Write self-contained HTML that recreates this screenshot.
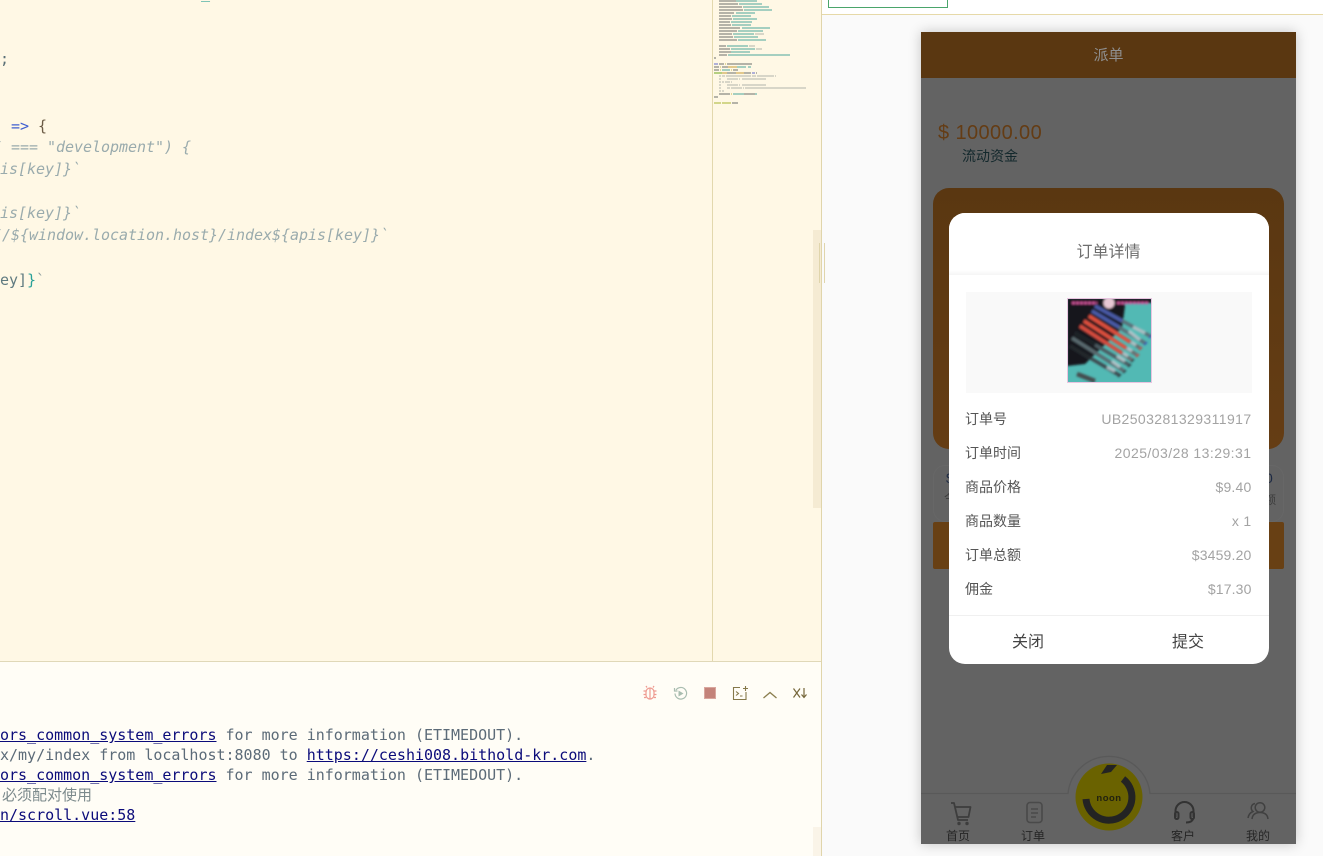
<!DOCTYPE html>
<html lang="zh">
<head>
<meta charset="utf-8">
<title>派单</title>
<style>
html,body{margin:0;padding:0;width:1323px;height:856px;overflow:hidden;background:#fafafa}
body{position:relative;font-family:"Liberation Sans","Noto Sans CJK SC",sans-serif}
.a{position:absolute;white-space:pre}
.code{font-family:"DejaVu Sans Mono","Liberation Mono","Noto Sans CJK SC",monospace;font-size:15px;line-height:22px;font-style:italic;color:#9aabad;letter-spacing:-.03px}
.term{font-family:"DejaVu Sans Mono","Liberation Mono","Noto Sans CJK SC",monospace;font-size:15px;line-height:20px;color:#5c6b78;letter-spacing:-.01px}
.term u{color:#0b0b7a;text-decoration:underline}
.row{position:absolute;left:965px;width:286.5px;height:20px;font-size:14px;line-height:20px}
.row b{position:absolute;left:0;font-weight:400;color:#555}
.row i{position:absolute;right:0;font-style:normal;color:#a3a3a3}
.tab{position:absolute;top:828px;width:60px;text-align:center;font-size:12px;line-height:16px;color:#262626}
</style>
</head>
<body>
<!-- editor -->
<div class="a" style="left:0;top:0;width:821px;height:661px;background:#fff8e5;overflow:hidden">
  <div class="a code" style="left:147px;top:-18px;font-style:normal;color:#2aa198">(  [  _   )</div>
  <div class="a code" style="left:0;top:48px;font-style:normal;color:#586e75">;</div>
  <div class="a code" style="left:11px;top:115px;font-style:normal;color:#3f5fd0">=&gt; <span style="color:#6b5b45">{</span></div>
  <div class="a code" style="left:-7px;top:136px">/ === "development") {</div>
  <div class="a code" style="left:-9px;top:158px">pis[key]}`</div>
  <div class="a code" style="left:-9px;top:202px">pis[key]}`</div>
  <div class="a code" style="left:-7px;top:224px">//${window.location.host}/index${apis[key]}`</div>
  <div class="a code" style="left:-9px;top:269px;font-style:normal;color:#5f7a80">key]<span style="color:#2aa198">}</span><span style="color:#93a1a1">`</span></div>

  <svg class="a" style="left:0;top:0" width="821" height="120" viewBox="0 0 2463 360" fill="none" stroke-width="6">
    <g transform="translate(2100 0)">
    <path stroke="#b5b3a8" d="M57 3H108M57 12H114M57 21H126M57 30H129M57 39H102M57 48H93M57 57H96M57 66H90M57 75H93M57 84H120M57 93H111M57 102H96M57 111H99M57 120H111M57 138H78M57 147H90M57 156H93M57 165H81M42 174H48M57 192H72M81 192H156M42 201H57M66 201H84M42 210H57M99 210H114M81 219H108M132 219H153M168 219H171M57 282H90M132 282H165M42 291H54M96 309H114"/>
    <path stroke="#a5cfc0" d="M108 3H171M117 12H186M129 21H207M132 30H216M108 39H165M96 48H153M99 57H171M93 66H156M96 75H153M126 84H210M114 93H189M99 102H162M102 111H174M114 120H198M81 138H144M93 147H165M93 156H150M84 165H270M111 201H138M144 201H153M66 210H90M99 282H132M165 282H171"/>
    <path stroke="#d8d6c8" d="M165 102H192M147 138H165M168 147H186M57 228H63M66 228H75M78 228H153M156 228H168M171 228H222M225 228H228M57 237H63M81 237H114M117 237H120M126 237H198M57 246H63M66 246H72M75 246H90M93 246H96M57 255H63M81 255H114M117 255H120M126 255H198M57 264H63M81 264H90M93 264H126M129 264H132M135 264H318M57 273H63M66 273H72"/>
    <path stroke="#b0b0d8" d="M42 192H54M156 219H165"/>
    <path stroke="#e3d89a" d="M75 192H78M60 201H63M60 210H63M93 210H96M93 282H96"/>
    <path stroke="#e3c98c" d="M84 201H111M66 219H81M108 219H132"/>
    <path stroke="#b5cf80" d="M42 219H66"/>
    <path stroke="#d3d68a" d="M42 309H63M66 309H93"/>
    </g>
  </svg>
  <div class="a" style="left:712px;top:0;width:1px;height:661px;background:#e3d8ad"></div>
  <div class="a" style="left:813px;top:230px;width:8px;height:278px;background:#f5ebd3"></div>
</div>
<!-- terminal -->
<div class="a" style="left:0;top:661px;width:821px;height:195px;background:#fffdf6;border-top:1px solid #e0d8b8;box-sizing:border-box"></div>
<div class="a term" style="left:0;top:725px"><u>ors_common_system_errors</u> for more information (ETIMEDOUT).</div>
<div class="a term" style="left:0;top:745px">x/my/index from localhost:8080 to <u>https://ceshi008.bithold-kr.com</u>.</div>
<div class="a term" style="left:0;top:765px"><u>ors_common_system_errors</u> for more information (ETIMEDOUT).</div>
<div class="a term" style="left:2px;top:785px;color:#7c8a8c">必须配对使用</div>
<div class="a term" style="left:0;top:805px"><u>n/scroll.vue:58</u></div>
<div class="a" style="left:813px;top:827px;width:8px;height:29px;background:#faf4e8"></div>

<svg class="a" style="left:640px;top:683px" width="172" height="22" viewBox="0 0 172 22" fill="none">
  <g stroke="#ee9a90" stroke-width="1.2"><rect x="6" y="5" width="8" height="11" rx="4"/><path d="M10 5V16M7 4.500L6 3M13 4.500L14 3M6 8H3.500M6 11.500H3.500M6 14.500H4M14 8H16.500M14 11.500H16.500M14 14.500H16"/></g>
  <g stroke="#a9bdb0" stroke-width="1.2"><path d="M36 7A5.800 5.800 0 1 1 35 10.500"/><path d="M34.500 5V8H37.500"/></g><path d="M38.500 7.500L43.500 10.500L38.500 13.500Z" fill="#a9bdb0"/>
  <rect x="64.500" y="4.500" width="11" height="11" fill="#c4837a" stroke="#d9a79e"/>
  <g stroke="#85784a" stroke-width="1.100"><path d="M100 4.500H93.500V16.500H106V9M96 8.500L98.500 10.500L96 12.500M100 13H102.500M105.500 3V8M103 5.500H108"/></g>
  <path d="M123.500 15L130 9.500L136.500 15" stroke="#8a7d4d" stroke-width="1.300"/>
  <g stroke="#75663a" stroke-width="1.200"><path d="M153.500 5.500L160 14.500M160 5.500L153.500 14.500M164 5V14M161.500 11.500L164 14.500L166.500 11.500"/></g>
</svg>

<!-- divider and sash -->
<div class="a" style="left:821px;top:0;width:1px;height:856px;background:#e0d5ab"></div>
<div class="a" style="left:819px;top:243px;width:1px;height:40px;background:#e0d5ab"></div>
<div class="a" style="left:824px;top:243px;width:1px;height:40px;background:#e0d5ab"></div>
<div class="a" style="left:822px;top:0;width:501px;height:14px;background:#fff"></div>
<div class="a" style="left:822px;top:14px;width:501px;height:1px;background:#e6d9a8"></div>
<div class="a" style="left:828px;top:-2px;width:120px;height:10px;box-sizing:border-box;border:1px solid #4aa56b;background:#fff"></div>

<!-- phone -->
<div class="a" style="left:921px;top:32px;width:375px;height:812px;background:#636363;box-shadow:0 0 12px rgba(0,0,0,.22);overflow:hidden">
  <div class="a" style="left:0;top:0;width:375px;height:46px;background:#5a3711;text-align:center;line-height:48px;font-size:15px;color:#8f8f8f">派单</div>
  <div class="a" style="left:17px;top:88px;font-size:20px;line-height:26px;color:#643c14;letter-spacing:.4px">$ 10000.00</div>
  <div class="a" style="left:41px;top:114px;font-size:14px;line-height:20px;color:#13282c">流动资金</div>
  <div class="a" style="left:12px;top:156px;width:351px;height:261px;border-radius:16px;background:linear-gradient(#5a3711,#653d14)"></div>
  <div class="a" style="left:12px;top:433px;width:351px;height:57px;border-radius:12px;box-sizing:border-box;border:1px solid #676767"></div>
  <div class="a" style="left:25px;top:437px;font-size:14px;line-height:18px;color:#1d2a44">$</div>
  <div class="a" style="left:23px;top:458px;font-size:12px;line-height:16px;color:#3c3c3c">今</div>
  <div class="a" style="left:344px;top:437px;font-size:14px;line-height:18px;color:#1d2a44">0</div>
  <div class="a" style="left:343px;top:460px;font-size:12px;line-height:16px;color:#3c3c3c">额</div>
  <div class="a" style="left:12px;top:490px;width:351px;height:47px;border-radius:2px;background:#684014"></div>

  <!-- tab bar -->
  <svg class="a" style="left:0;top:720px" width="375" height="92" viewBox="0 0 375 92" fill="none">
    <path d="M0 41.500H147A41.200 41.200 0 0 1 229 41.500H375" stroke="#595959" stroke-width="1.300"/>
    <circle cx="188" cy="45" r="33.500" fill="#6a6200"/>
    <path d="M165 47A23 23 0 1 0 202 27" stroke="#232323" stroke-width="7"/>
    <path d="M180 22L186 13L196 13L190 20Z" fill="#232323"/>
    <text x="188" y="49" text-anchor="middle" font-family="Liberation Sans,sans-serif" font-size="9.500" font-weight="700" fill="#22220f" letter-spacing=".5">noon</text>
    <!-- cart -->
    <g stroke="#3d3d3d" stroke-width="1.800" stroke-linejoin="round">
      <path d="M30 51H33L37 68H47M34.500 55H49.500L47.500 65H36.800"/>
    </g>
    <circle cx="38" cy="71.500" r="1.700" fill="#3d3d3d"/><circle cx="46" cy="71.500" r="1.700" fill="#3d3d3d"/>
    <!-- doc -->
    <g stroke="#4a4a4a" stroke-width="1.600"><rect x="106" y="50.500" width="15" height="20" rx="3"/><path d="M110 57H117M110 61H117M110 65H115"/></g>
    <!-- headset -->
    <g stroke="#333" stroke-width="2"><path d="M254.500 65V59A9 9 0 0 1 272.500 59V65"/><rect x="254" y="60" width="3.500" height="7" rx="1.700"/><rect x="269.500" y="60" width="3.500" height="7" rx="1.700"/><path d="M272 67C271 70 268 70.500 265 70.500"/></g>
    <!-- user -->
    <g stroke="#404040" stroke-width="1.500"><circle cx="339" cy="55.500" r="4.800"/><path d="M331 67C331.500 62.500 334 60.500 339 60.500C344 60.500 346.500 62.500 347 67"/><path d="M334 51.500A4.500 4.500 0 0 0 332 59.500C329.500 60.500 327.500 63 327 66"/></g>
  </svg>
  <div class="tab" style="left:7px;top:796px">首页</div>
  <div class="tab" style="left:82px;top:796px">订单</div>
  <div class="tab" style="left:232px;top:796px">客户</div>
  <div class="tab" style="left:307px;top:796px">我的</div>
</div>

<!-- modal -->
<div class="a" style="left:949px;top:213px;width:320px;height:451px;background:#fff;border-radius:16px;overflow:hidden">
  <div class="a" style="left:0;top:0;width:320px;height:62px;background:linear-gradient(#fff 92%,#f5f5f5);text-align:center;line-height:79px;font-size:16px;color:#6e6e6e;text-indent:-1px">订单详情</div>
  <div class="a" style="left:0;top:402px;width:320px;height:1px;background:#f0f0f0"></div>
  <div class="a" style="left:-1px;top:403px;width:160px;height:48px;text-align:center;line-height:54px;font-size:16px;color:#444">关闭</div>
  <div class="a" style="left:159px;top:403px;width:160px;height:48px;text-align:center;line-height:54px;font-size:16px;color:#444">提交</div>
</div>
<div class="a" style="left:966px;top:292px;width:286px;height:101px;background:#f9f9f9"></div>
<svg class="a" style="left:1067px;top:298px" width="85" height="85" viewBox="0 0 85 85">
  <defs><filter id="b" x="-5%" y="-5%" width="110%" height="110%"><feGaussianBlur stdDeviation="1"/></filter></defs>
  <rect width="85" height="85" fill="#52b9b4"/>
  <g filter="url(#b)">
    <path d="M0 0H56L58 8L55 30L18 66L0 68Z" fill="#12181c"/>
    <rect width="85" height="5" fill="#14141c"/>
    <g fill="none" stroke-width="3.500">
      <path d="M28 8L83 38" stroke="#5a7078"/>
      <path d="M25 13L78 45" stroke="#5a7078"/>
      <path d="M22 18L73 50" stroke="#6a6e70"/>
      <path d="M17 23L70 57" stroke="#6a6e70"/>
      <path d="M13 28L65 62" stroke="#6a6e70"/>
      <path d="M8 35L62 67" stroke="#4c5a60"/>
      <path d="M5 40L57 73" stroke="#5a6a70"/>
      <path d="M3 48L52 77" stroke="#3e4a50"/>
    </g>
    <g fill="none" stroke-width="3.500">
      <path d="M28 8L55 23" stroke="#4a5aa8"/>
      <path d="M25 13L52 29" stroke="#4a5aa8"/>
      <path d="M22 18L63 44" stroke="#e0503c"/>
      <path d="M17 23L59 50" stroke="#e0503c"/>
      <path d="M13 28L55 55" stroke="#d84c3c"/>
      <path d="M8 35L28 47" stroke="#1c2226"/>
      <path d="M3 48L24 60" stroke="#22282c"/>
    </g>
    <g fill="none" stroke-width="3.500" stroke="#b8ccd0" opacity=".85">
      <path d="M66 29L78 35"/><path d="M62 33L73 42"/><path d="M64 44L69 47"/><path d="M60 50L65 53"/><path d="M56 55L61 58"/><path d="M50 58L58 63"/><path d="M45 63L53 69"/><path d="M40 69L48 73"/>
    </g>
    <path d="M83 38L84 39M78 45L79 46" stroke="#3040b0" stroke-width="4"/>
    <path d="M73 50L74 51M70 57L71 58" stroke="#d03020" stroke-width="4"/>
    <path d="M65 62L66 63M62 67L63 68M57 73L58 74M52 77L53 78" stroke="#20242a" stroke-width="4"/>
    <path d="M10 76L28 83" stroke="#454d50" stroke-width="4.500"/>
    <circle cx="42" cy="5" r="5.500" fill="#e8c8d4"/>
    <path d="M5 5H30M50 5H82" stroke="#d858a0" stroke-width="2.500" stroke-dasharray="3 1"/>
  </g>
  <rect x=".5" y=".5" width="84" height="84" fill="none" stroke="#e8c4e0"/>
</svg>
<div class="row" style="top:409px"><b>订单号</b><i style="letter-spacing:.4px">UB2503281329311917</i></div>
<div class="row" style="top:443px"><b>订单时间</b><i style="letter-spacing:.45px">2025/03/28 13:29:31</i></div>
<div class="row" style="top:477px"><b>商品价格</b><i style="letter-spacing:.2px">$9.40</i></div>
<div class="row" style="top:511px"><b>商品数量</b><i style="letter-spacing:.3px">x 1</i></div>
<div class="row" style="top:545px"><b>订单总额</b><i style="letter-spacing:.17px">$3459.20</i></div>
<div class="row" style="top:579px"><b>佣金</b><i style="letter-spacing:.13px">$17.30</i></div>
</body>
</html>
